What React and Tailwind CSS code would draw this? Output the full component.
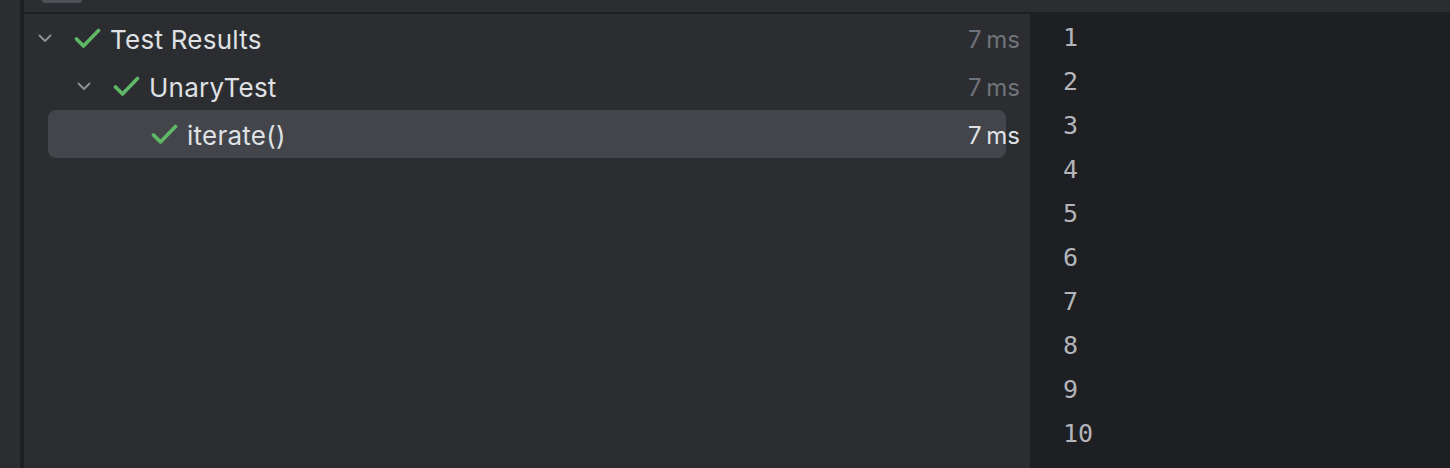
const rows = [
    { label: "Test Results", time: "7 ms", level: 0, expandable: true },
    { label: "UnaryTest", time: "7 ms", level: 1, expandable: true },
    { label: "iterate()", time: "7 ms", level: 2, expandable: false, selected: true },
];

const indents = ["w-0", "w-[39px]", "w-[77px]"];

const Chevron = () => (
    <svg width="14" height="9" viewBox="0 0 14 9" fill="none">
        <path d="M1.5 1.5 L7 7 L12.5 1.5" stroke="#8c9097" strokeWidth="1.9" strokeLinecap="round" strokeLinejoin="round" />
    </svg>
);

const Check = () => (
    <svg width="27" height="21" viewBox="0 0 27 21" fill="none">
        <path d="M2.5 11 L9.5 18 L24.5 2.5" stroke="#5fb865" strokeWidth="3.6" strokeLinecap="round" strokeLinejoin="round" />
    </svg>
);

const TreeRow = ({ row }) => (
    <div
        className={
            "flex items-center h-[48px] mx-[24px] rounded-lg " +
            (row.selected ? "bg-[#43454a]" : "")
        }
    >
        <div className="flex items-center flex-1 -ml-[10px]">
            <div className={indents[row.level]} />
            <div className="w-[14px] flex items-center justify-center mt-[1px]">
                {row.expandable && <Chevron />}
            </div>
            <div className="ml-[22px] flex items-center mt-[1px]">
                <Check />
            </div>
            <span className="ml-[9px] mt-[3px] text-[26px] text-[#dfe1e5] leading-none tracking-[0.25px]">{row.label}</span>
        </div>
        <span
            className={
                "-mr-[14px] mt-[3px] text-[24px] leading-none [word-spacing:-2px] " +
                (row.selected ? "text-[#dfe1e5]" : "text-[#6f737a]")
            }
        >
            {row.time}
        </span>
    </div>
);

export default function App() {
    return (
        <div className="w-[1450px] h-[468px] flex bg-[#2b2d30] overflow-hidden font-['Inter','Noto_Sans',sans-serif]">
            <div className="w-[20px] shrink-0 bg-[#2b2d30]" />
            <div className="w-[4px] shrink-0 bg-[#1e1f22]" />
            <div className="flex-1 flex flex-col">
                <div className="h-[12px] shrink-0 bg-[#2b2d30]">
                    <div className="ml-[18px] w-[40px] h-[3px] rounded-b-md bg-[#4e5157]" />
                </div>
                <div className="h-[2px] shrink-0 bg-[#1e1f22]" />
                <div className="flex-1 flex">
                    <div className="w-[1006px] shrink-0 bg-[#2b2d30] flex flex-col">
                        {rows.map((r) => (
                            <TreeRow key={r.label} row={r} />
                        ))}
                    </div>
                    <div className="flex-1 bg-[#1e1f22] pt-[2px] pl-[33px] font-['DejaVu_Sans_Mono',monospace] text-[25px] text-[#b3b5ba]">
                        {[1, 2, 3, 4, 5, 6, 7, 8, 9, 10].map((n) => (
                            <div key={n} className="h-[44px] flex items-center">
                                {n}
                            </div>
                        ))}
                    </div>
                </div>
            </div>
        </div>
    );
}
